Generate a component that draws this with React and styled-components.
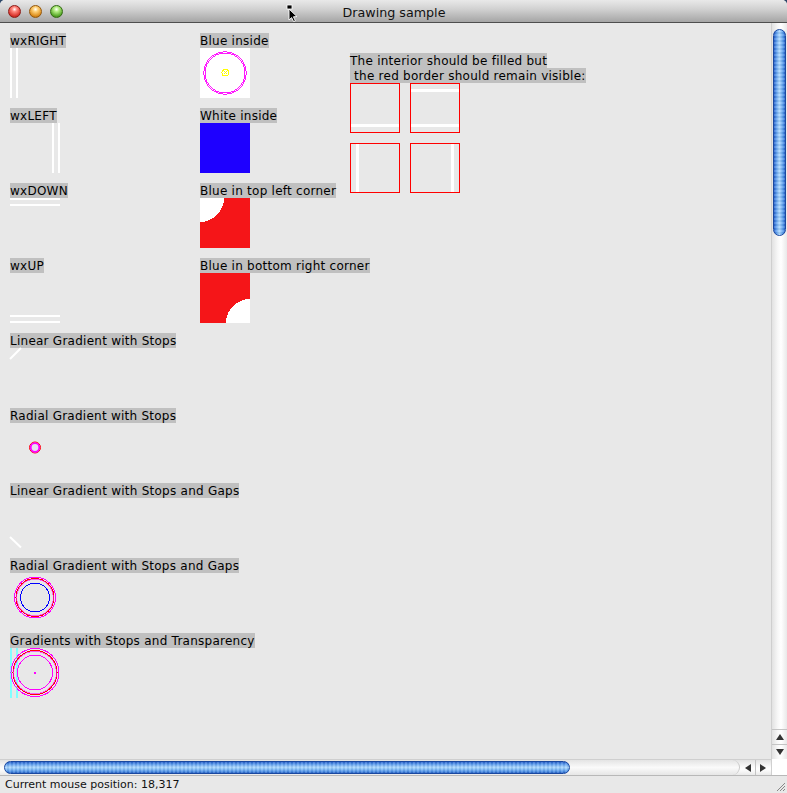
import React from "react";
import styled, { createGlobalStyle } from "styled-components";

const Global = createGlobalStyle`
  html, body { margin: 0; padding: 0; background: #2c4668; overflow: hidden; }
  #root { width: 787px; height: 793px; }
`;

const Window = styled.div`
  width: 787px;
  height: 793px;
  display: flex;
  flex-direction: column;
  border-radius: 5px 5px 0 0;
  overflow: hidden;
  position: relative;
  background: #e8e8e8;
  font-family: "DejaVu Sans", "Liberation Sans", sans-serif;
`;

const TitleBar = styled.div`
  height: 23px;
  box-sizing: border-box;
  border-bottom: 1px solid #4e4e4e;
  background: linear-gradient(to bottom, #e9e9e9 0%, #d2d2d2 40%, #b8b8b8 75%, #a5a5a5 100%);
  display: grid;
  grid-template-columns: 1fr auto 1fr;
  align-items: center;
`;

const Lights = styled.div`
  display: flex;
  gap: 8px;
  padding-left: 8px;
  padding-top: 1px;
`;

const Light = styled.span`
  width: 13px;
  height: 13px;
  border-radius: 50%;
  box-sizing: border-box;
  border: 1px solid ${(p) => p.$edge};
  background: radial-gradient(circle at 50% 30%, #ffffff 0%, ${(p) => p.$light} 25%, ${(p) => p.$base} 70%, ${(p) => p.$edge} 100%);
`;

const Title = styled.div`
  font-size: 12.7px;
  color: #111;
  padding-top: 2px;
  padding-left: 1px;
`;

const Cursor = styled.svg`
  position: absolute;
  left: 286px;
  top: 4px;
`;

const Main = styled.div`
  height: 736px;
  display: flex;
`;

const Canvas = styled.div`
  flex: 1;
  background: #e8e8e8;
  display: grid;
  grid-template-columns: 190px 150px 1fr;
  grid-auto-rows: 75px;
  align-content: start;
  padding: 10px 0 0 10px;
  overflow: hidden;
`;

const Cell = styled.div`
  grid-column: ${(p) => p.$col};
  grid-row: ${(p) => p.$row};
  display: flex;
  flex-direction: column;
  align-items: flex-start;
`;

const NoteCell = styled.div`
  grid-column: 3;
  grid-row: 1 / span 3;
  padding-top: 20px;
  display: flex;
  flex-direction: column;
  align-items: flex-start;
`;

const Label = styled.span`
  display: block;
  font-size: 12px;
  letter-spacing: 0.25px;
  line-height: 17px;
  height: 15px;
  background: #c0c0c0;
  color: #000;
  white-space: pre;
`;

const Drawing = styled.svg`
  display: block;
  overflow: visible;
`;

const Boxes = styled.div`
  display: grid;
  grid-template-columns: 50px 50px;
  grid-auto-rows: 50px;
  gap: 10px;
`;

const VScroll = styled.div`
  width: 16px;
  display: flex;
  flex-direction: column;
  background: linear-gradient(to right, #e2e2e2 0%, #f8f8f8 40%, #ffffff 60%, #e9e9e9 100%);
  border-left: 1px solid #cfcfcf;
  box-sizing: border-box;
`;

const Thumb = styled.div`
  box-sizing: border-box;
  border-radius: 7px;
  border: 1px solid #1a48a0;
  background:
    repeating-linear-gradient(${(p) => (p.$h ? "to right" : "to bottom")}, rgba(255,255,255,0.14) 0 2px, rgba(0,0,0,0.05) 2px 4px),
    linear-gradient(${(p) => (p.$h ? "to bottom" : "to right")}, #2460cc 0%, #5f9fef 22%, #acd8ff 48%, #8cc4fb 62%, #4f93e8 85%, #2460c6 100%);
`;

const VThumb = styled(Thumb)`
  margin: 6px 1px 0 1px;
  height: 207px;
`;

const Spacer = styled.div`
  flex: 1;
`;

const ArrowBtn = styled.div`
  display: flex;
  align-items: center;
  justify-content: center;
  ${(p) => (p.$h ? "width: 15px; height: 100%;" : "height: 15px; width: 100%;")}
  ${(p) => (p.$sep ? (p.$h ? "border-left: 1px solid #c4c4c4;" : "border-top: 1px solid #c4c4c4;") : "")}
  box-sizing: border-box;
`;

const HRow = styled.div`
  height: 16px;
  display: flex;
`;

const HScroll = styled.div`
  flex: 1;
  display: flex;
  align-items: center;
  background: linear-gradient(to bottom, #e2e2e2 0%, #f8f8f8 40%, #ffffff 60%, #e9e9e9 100%);
  border-top: 1px solid #cfcfcf;
  box-sizing: border-box;
`;

const HThumb = styled(Thumb)`
  margin-left: 4px;
  width: 566px;
  height: 13px;
`;

const HTrackEnd = styled.div`
  flex: 1;
  align-self: stretch;
  border-radius: 0 8px 8px 0;
  border-right: 1px solid #c9c9c9;
  background: linear-gradient(to bottom, #e4e4e4 0%, #fafafa 50%, #e6e6e6 100%);
`;

const HArrows = styled.div`
  display: flex;
  height: 100%;
  width: 31px;
`;

const Corner = styled.div`
  width: 16px;
  background: #fff;
  border-left: 1px solid #d0d0d0;
  box-sizing: border-box;
`;

const Status = styled.div`
  flex: 1;
  box-sizing: border-box;
  border-top: 1px solid #b8b8b8;
  background: #e8e8e8;
  font-size: 11px;
  color: #111;
  padding-left: 5px;
  display: flex;
  align-items: center;
  position: relative;
`;

const Grip = styled.svg`
  position: absolute;
  right: 1px;
  bottom: 1px;
`;

const Tri = ({ dir }) => {
  const pts = {
    up: "0,6 4,0 8,6",
    down: "0,0 8,0 4,6",
    left: "6,0 6,8 0,4",
    right: "0,0 0,8 6,4",
  }[dir];
  const w = dir === "up" || dir === "down" ? 8 : 6;
  const h = dir === "up" || dir === "down" ? 6 : 8;
  return (
    <svg width={w} height={h}>
      <polygon points={pts} fill="#333" />
    </svg>
  );
};

const W = "#ffffff";
const MAG = "#ff00ff";
const RED = "#ff0000";

function Item({ col, row, label, children, w = 50, h = 50 }) {
  return (
    <Cell $col={col} $row={row}>
      <Label>{label}</Label>
      <Drawing width={w} height={h} shapeRendering="crispEdges">
        {children}
      </Drawing>
    </Cell>
  );
}

function FillBox({ bars }) {
  return (
    <Drawing width={50} height={50} shapeRendering="crispEdges">
      {bars.map((b, i) => (
        <rect key={i} x={b[0]} y={b[1]} width={b[2]} height={b[3]} fill={W} />
      ))}
      <rect x={0.5} y={0.5} width={49} height={49} fill="none" stroke={RED} strokeWidth={1} />
    </Drawing>
  );
}

export default function App() {
  return (
    <>
      <Global />
      <Window>
        <TitleBar>
          <Lights>
            <Light $base="#d8332b" $light="#ff8a80" $edge="#8e1b16" />
            <Light $base="#dc8e1e" $light="#ffd27a" $edge="#94570c" />
            <Light $base="#58a82a" $light="#b6ee86" $edge="#336b14" />
          </Lights>
          <Title>Drawing sample</Title>
          <div />
        </TitleBar>
        <Cursor width="14" height="18" viewBox="0 0 14 18">
          <rect x="1" y="1" width="5" height="4" fill="#000" stroke="#fff" strokeWidth="0.8" />
          <path d="M3 5 L3 16 L5.6 13.6 L7.6 17.6 L9.4 16.8 L7.4 12.8 L11 12.6 Z" fill="#000" stroke="#fff" strokeWidth="0.9" />
        </Cursor>
        <Main>
          <Canvas>
            <Item col={1} row={1} label="wxRIGHT">
              <rect x={0} y={0} width={2} height={50} fill={W} />
              <rect x={6} y={0} width={2} height={50} fill={W} />
            </Item>
            <Item col={1} row={2} label="wxLEFT">
              <rect x={42} y={0} width={2} height={50} fill={W} />
              <rect x={48} y={0} width={2} height={50} fill={W} />
            </Item>
            <Item col={1} row={3} label="wxDOWN">
              <rect x={0} y={0} width={50} height={2} fill={W} />
              <rect x={0} y={6} width={50} height={2} fill={W} />
            </Item>
            <Item col={1} row={4} label="wxUP">
              <rect x={0} y={42} width={50} height={2} fill={W} />
              <rect x={0} y={48} width={50} height={2} fill={W} />
            </Item>
            <Item col={1} row={5} label="Linear Gradient with Stops">
              <line x1={0} y1={11} x2={11} y2={0} stroke={W} strokeWidth={2} shapeRendering="auto" />
            </Item>
            <Item col={1} row={6} label="Radial Gradient with Stops">
              <circle cx={25} cy={24.5} r={5.5} fill="#e6e2f2" stroke={RED} strokeWidth={1} shapeRendering="auto" />
              <circle cx={25} cy={24.5} r={4.3} fill="none" stroke={MAG} strokeWidth={1.8} shapeRendering="auto" />
            </Item>
            <Item col={1} row={7} label="Linear Gradient with Stops and Gaps">
              <line x1={0} y1={39} x2={11} y2={49.5} stroke={W} strokeWidth={2} shapeRendering="auto" />
            </Item>
            <Item col={1} row={8} label="Radial Gradient with Stops and Gaps">
              <circle cx={25} cy={24.5} r={20.5} fill="none" stroke={MAG} strokeWidth={1} />
              <circle cx={25} cy={24.5} r={19} fill="none" stroke={RED} strokeWidth={1} />
              <circle cx={25} cy={24.5} r={18.3} fill="none" stroke={MAG} strokeWidth={0.6} />
              <circle cx={25} cy={24.5} r={14.5} fill="none" stroke="#0000ff" strokeWidth={1} />
            </Item>
            <Item col={1} row={9} label="Gradients with Stops and Transparency">
              <rect x={0} y={0} width={2} height={50} fill="#80ffff" />
              <rect x={6} y={0} width={2} height={50} fill="#80ffff" />
              <circle cx={25} cy={24.5} r={24} fill="none" stroke={MAG} strokeWidth={1} />
              <circle cx={25} cy={24.5} r={22} fill="none" stroke={RED} strokeWidth={1} />
              <circle cx={25} cy={24.5} r={21.3} fill="none" stroke={MAG} strokeWidth={0.6} />
              <circle cx={25} cy={24.5} r={17.5} fill="none" stroke={MAG} strokeWidth={1} />
              <rect x={24} y={24} width={2} height={2} fill={MAG} />
            </Item>

            <Item col={2} row={1} label="Blue inside">
              <rect x={0} y={0} width={50} height={50} fill={W} />
              <circle cx={25} cy={25} r={21.2} fill="none" stroke={MAG} strokeWidth={0.9} />
              <circle cx={25} cy={25} r={20} fill="none" stroke={MAG} strokeWidth={0.9} />
              <circle cx={25.5} cy={24.5} r={3.5} fill="none" stroke="#ffff00" strokeWidth={1} />
              <path d="M23.5 22.5 L27.5 26.5 M27.5 22.5 L23.5 26.5" stroke="#ffff00" strokeWidth={1} />
            </Item>
            <Item col={2} row={2} label="White inside">
              <rect x={0} y={0} width={50} height={50} fill="#1e00ff" />
            </Item>
            <Item col={2} row={3} label="Blue in top left corner">
              <rect x={0} y={0} width={50} height={50} fill="#f51518" />
              <path d="M0 0 L24 0 A24 24 0 0 1 0 24 Z" fill={W} />
            </Item>
            <Item col={2} row={4} label="Blue in bottom right corner">
              <rect x={0} y={0} width={50} height={50} fill="#f51518" />
              <path d="M50 50 L26 50 A24 24 0 0 1 50 26 Z" fill={W} />
            </Item>

            <NoteCell>
              <Label>The interior should be filled but</Label>
              <Label> the red border should remain visible:</Label>
              <Boxes>
                <FillBox bars={[[1, 41, 48, 3]]} />
                <FillBox bars={[[1, 6, 48, 3], [1, 41, 48, 3]]} />
                <FillBox bars={[[6, 1, 3, 48]]} />
                <FillBox bars={[[41, 1, 3, 48]]} />
              </Boxes>
            </NoteCell>
          </Canvas>
          <VScroll>
            <VThumb />
            <Spacer />
            <ArrowBtn $sep>
              <Tri dir="up" />
            </ArrowBtn>
            <ArrowBtn $sep>
              <Tri dir="down" />
            </ArrowBtn>
          </VScroll>
        </Main>
        <HRow>
          <HScroll>
            <HThumb $h />
            <HTrackEnd />
            <HArrows>
              <ArrowBtn $h>
                <Tri dir="left" />
              </ArrowBtn>
              <ArrowBtn $h $sep>
                <Tri dir="right" />
              </ArrowBtn>
            </HArrows>
          </HScroll>
          <Corner />
        </HRow>
        <Status>
          Current mouse position: 18,317
          <Grip width="12" height="12">
            <path d="M11 3 L3 11 M11 6 L6 11 M11 9 L9 11" stroke="#888" strokeWidth="1" />
          </Grip>
        </Status>
      </Window>
    </>
  );
}
